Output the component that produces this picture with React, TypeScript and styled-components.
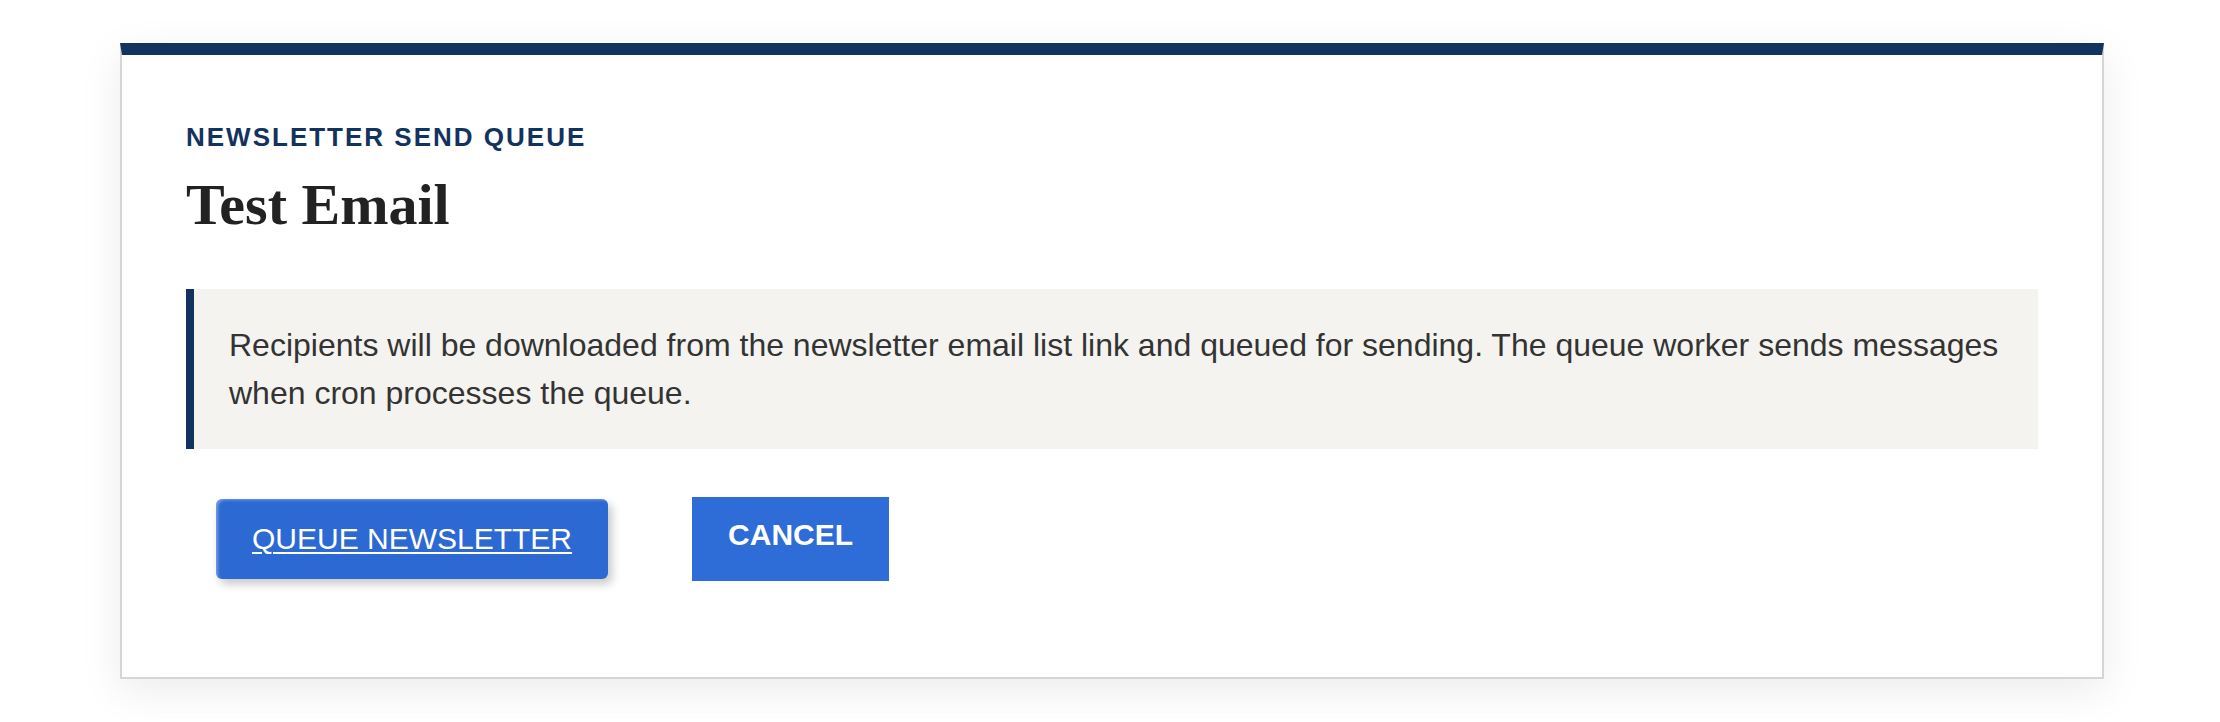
import React from "react";
import styled, { createGlobalStyle } from "styled-components";

const GlobalStyle = createGlobalStyle`
  html, body {
    margin: 0;
    padding: 0;
    background: #ffffff;
  }
  body {
    font-family: "Liberation Sans", Arial, sans-serif;
    color: #333333;
  }
`;

const Page = styled.main`
  padding: 43px 116px 40px 120px;
`;

const Card = styled.section`
  background: #ffffff;
  border: 2px solid #d9d5d0;
  border-top: 12px solid #13335f;
  box-shadow: 0 12px 40px rgba(0, 0, 0, 0.08);
  padding: 64px 64px 96px;
`;

const Eyebrow = styled.p`
  margin: 0;
  font-family: "Liberation Sans", Arial, sans-serif;
  font-size: 26px;
  line-height: 1.4;
  font-weight: 700;
  letter-spacing: 2px;
  text-transform: uppercase;
  color: #13335f;
`;

const Title = styled.h1`
  margin: 15px 0 0;
  font-family: "Liberation Serif", "Times New Roman", serif;
  font-size: 58px;
  line-height: 1.2;
  font-weight: 700;
  color: #222222;
`;

const Notice = styled.div`
  margin-top: 49px;
  background: #f4f3ef;
  border-left: 8px solid #13335f;
  padding: 32px 36px 32px 35px;
  font-size: 32px;
  line-height: 48px;
  color: #333333;
`;

const Actions = styled.div`
  display: flex;
  align-items: center;
  gap: 84px;
  margin-top: 48px;
  padding-left: 30px;
`;

const PrimaryLink = styled.a`
  display: inline-block;
  background: #2d69d3;
  color: #ffffff;
  font-family: "Liberation Sans", Arial, sans-serif;
  font-size: 30px;
  line-height: 34px;
  padding: 23px 36px;
  border-radius: 6px;
  text-decoration: underline;
  text-decoration-thickness: 2px;
  text-underline-offset: 3px;
  box-shadow: 4px 5px 10px rgba(0, 0, 0, 0.22),
    inset 3px 2px 3px -1px rgba(255, 255, 255, 0.35);
  cursor: pointer;
`;

const SecondaryButton = styled.button`
  border: none;
  border-radius: 0;
  background: #2e6cd8;
  color: #ffffff;
  font-family: "Liberation Sans", Arial, sans-serif;
  font-size: 30px;
  font-weight: 700;
  line-height: 34px;
  padding: 21px 36px 29px;
  text-transform: uppercase;
  cursor: pointer;
`;

export default function App() {
  return (
    <>
      <GlobalStyle />
      <Page>
        <Card>
          <Eyebrow>Newsletter Send Queue</Eyebrow>
          <Title>Test Email</Title>
          <Notice>
            Recipients will be downloaded from the newsletter email list link
            and queued for sending. The queue worker sends messages when cron
            processes the queue.
          </Notice>
          <Actions>
            <PrimaryLink href="#queue">QUEUE NEWSLETTER</PrimaryLink>
            <SecondaryButton type="button">Cancel</SecondaryButton>
          </Actions>
        </Card>
      </Page>
    </>
  );
}
